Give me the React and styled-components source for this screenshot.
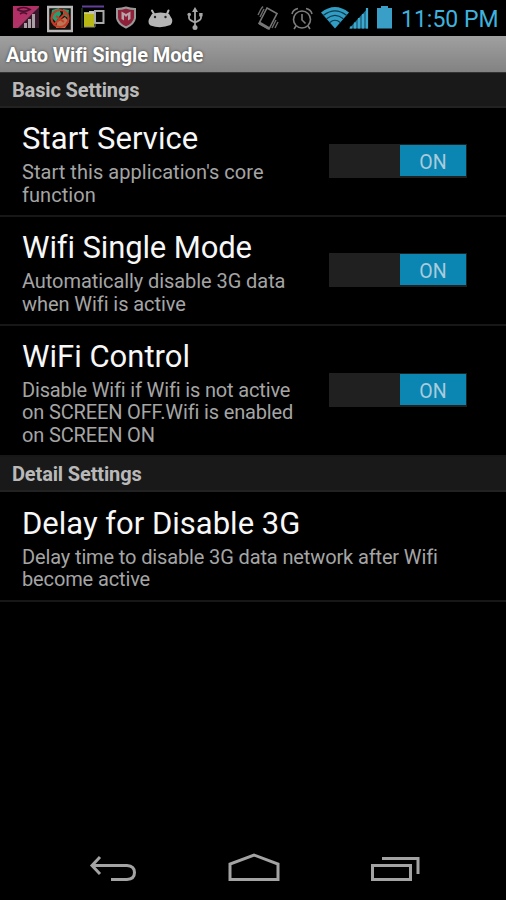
import React from "react";
import styled, { createGlobalStyle } from "styled-components";

const GlobalStyle = createGlobalStyle`
  * {
    box-sizing: border-box;
  }
  body {
    margin: 0;
    background: #000000;
    font-family: Roboto, sans-serif;
  }
`;

const Screen = styled.div`
  display: flex;
  flex-direction: column;
  width: 506px;
  height: 900px;
  background: #000000;
  overflow: hidden;
`;
const StatusBar = styled.header`
  display: flex;
  flex: none;
  justify-content: space-between;
  height: 36px;
  padding: 0 7px 0 13px;
`;
const StatusGroup = styled.div`
  display: flex;
  align-items: flex-start;
`;
const StatusIcon = styled.svg`
  flex: none;
  width: ${props => props.$width}px;
  height: 36px;
  margin-right: ${props => props.$gap || 0}px;
`;
const Clock = styled.span`
  width: 98px;
  color: #3fb2dd;
  font-size: 23px;
  line-height: 39px;
  white-space: nowrap;
`;
const TitleBar = styled.h1`
  flex: none;
  height: 37px;
  margin: 0;
  padding-left: 6px;
  background: linear-gradient(#a0a0a0, #828282);
  border-bottom: 1px solid #333333;
  color: #ffffff;
  font-size: 20px;
  font-weight: 700;
  line-height: 38px;
  letter-spacing: -0.12px;
  text-shadow: 0 0 3px rgba(0, 0, 0, 0.6);
`;
const SectionTitle = styled.h2`
  flex: none;
  height: 35px;
  margin: 0;
  padding-left: 12px;
  background: #191919;
  border-bottom: 2px solid #222222;
  color: #b9b9b9;
  font-size: 20px;
  font-weight: 700;
  line-height: 34px;
  letter-spacing: -0.14px;
`;
const Row = styled.section`
  display: flex;
  flex: none;
  align-items: center;
  justify-content: space-between;
  height: ${props => props.$height}px;
  padding: 0 39px 2px 22px;
  border-bottom: 2px solid #171717;
`;
const RowText = styled.div`
  padding-top: 5px;
`;
const RowTitle = styled.h3`
  margin: 0;
  color: #f7f7f7;
  font-size: 31px;
  font-weight: 400;
  line-height: 38px;
  letter-spacing: ${props => props.$spacing || 0}px;
  white-space: nowrap;
`;
const Summary = styled.p`
  margin: 0;
  padding-top: 3px;
  color: #a5a5a5;
  font-size: 20px;
  line-height: 22.3px;
  letter-spacing: ${props => props.$spacing}px;
  white-space: pre;
`;
const Track = styled.div`
  display: flex;
  justify-content: flex-end;
  width: 138px;
  height: 34px;
  padding: 1px;
  background: #202020;
`;
const Thumb = styled.div`
  width: 66px;
  height: 31px;
  background: #0b86b2;
  color: #a9cbdc;
  font-size: 19.5px;
  line-height: 35px;
  text-align: center;
`;
const Spacer = styled.div`
  flex: 1;
`;
const NavBar = styled.nav`
  display: flex;
  flex: none;
  justify-content: space-between;
  height: 49px;
  padding: 0 86px 0 88px;
`;
const NavIcon = styled.svg`
  width: ${props => props.$width}px;
  height: 34px;
  fill: none;
  stroke: #a3a3a3;
  stroke-width: 3;
`;

const settings = [
  {
    title: "Start Service",
    summary: "Start this application's core\nfunction",
    height: 109,
    titleSpacing: 0.08,
    spacing: 0.05,
  },
  {
    title: "Wifi Single Mode",
    summary: "Automatically disable 3G data\nwhen Wifi is active",
    height: 109,
    titleSpacing: -0.12,
    spacing: -0.07,
  },
  {
    title: "WiFi Control",
    summary: "Disable Wifi if Wifi is not active\non SCREEN OFF.Wifi is enabled\non SCREEN ON",
    height: 131,
    spacing: -0.15,
  },
];

function Setting({ title, summary, height, titleSpacing, spacing, toggle }) {
  return (
    <Row $height={height}>
      <RowText>
        <RowTitle $spacing={titleSpacing}>{title}</RowTitle>
        <Summary $spacing={spacing}>{summary}</Summary>
      </RowText>
      {toggle && (
        <Track>
          <Thumb>ON</Thumb>
        </Track>
      )}
    </Row>
  );
}

function Notifications() {
  return (
    <StatusGroup>
      {/* wifi / mobile switch */}
      <StatusIcon $width={26} $gap={8} viewBox="0 0 26 36">
        <path d="M0 6H26V8L7 28H0Z" fill="#b52f67" />
        <path d="M26 7V28H5Z" fill="#35192a" />
        <path d="M4 9.500Q10.500 5.500 17 9.500Q10.500 13 4 9.500M7 14Q10.500 11.500 14 14" fill="none" stroke="#4a1230" strokeWidth="1.600" />
        <path d="M12.500 28V23M16.500 28V19M20.500 28V14" stroke="#a9a0a5" strokeWidth="3" />
        <path d="M1 27L25 7" stroke="#a43b68" strokeWidth="1.500" />
      </StatusIcon>
      {/* blocked app */}
      <StatusIcon $width={26} $gap={8} viewBox="0 0 26 36">
        <rect x="1" y="7" width="24" height="24" fill="#17110e" stroke="#b7b7b7" strokeWidth="2.500" />
        <path d="M5 10L12 8L14 14L9 22L4 17Z" fill="#22a071" />
        <path d="M16 9L22 10L21 18L16 15Z" fill="#25966a" />
        <path d="M10 22L18 17L22 22L18 28H9Z" fill="#ba7654" />
        <circle cx="13" cy="18.500" r="8.500" fill="none" stroke="#c63b27" strokeWidth="2.200" />
        <path d="M7 24.500L19 12.500M9 16L17 22" stroke="#c63b27" strokeWidth="2" />
      </StatusIcon>
      {/* file copy */}
      <StatusIcon $width={24} $gap={11} viewBox="0 0 24 36">
        <path d="M1 6.500H23" stroke="#60409b" strokeWidth="2" />
        <path d="M1 8V28" stroke="#213a1d" strokeWidth="1.500" />
        <rect x="14" y="11" width="8.500" height="12" fill="#050505" stroke="#aaaaaa" strokeWidth="2" />
        <path d="M3 12H13V27H3Z" fill="#b9b916" />
        <path d="M3 13H8V11H13V14H3Z" fill="#c3c3b8" />
        <path d="M3 27H14V23" fill="none" stroke="#8f8f77" />
      </StatusIcon>
      {/* shield */}
      <StatusIcon $width={20} $gap={12} viewBox="0 0 20 36">
        <path d="M1 9Q6 9 10 7.500Q14 9 19 9V18Q18 24 10 27.500Q2 24 1 18Z" fill="#8e2039" stroke="#989898" strokeWidth="2" />
        <path d="M5.500 11.500V19L8 20.500V15L10 17L12 15V20.500L14.500 19V11.500L10 14Z" fill="#b6a2a8" />
      </StatusIcon>
      {/* android head */}
      <StatusIcon $width={25} $gap={14} viewBox="0 0 25 36">
        <path d="M4 10.500L6 14M20.500 10.500L19 14" stroke="#b5b5b5" strokeWidth="2" strokeLinecap="round" />
        <path d="M4 14Q8 12.500 12.500 12.500Q17 12.500 21 14L24 19Q25 23 22.500 25Q12.500 29 2.500 25.500Q-0.500 24 1 19Z" fill="#b5b5b5" />
        <circle cx="7" cy="17" r="1.200" fill="#222222" />
        <circle cx="17.500" cy="17" r="1.200" fill="#222222" />
      </StatusIcon>
      {/* usb */}
      <StatusIcon $width={16} viewBox="0 0 16 36">
        <path d="M8 10V28M2 15V18Q2 20 8 22.500M14 15V18Q14 20 8 22.500" fill="none" stroke="#a5a5a5" strokeWidth="1.800" />
        <path d="M8 7L11 12H5Z" fill="#a5a5a5" />
        <circle cx="2.200" cy="14.500" r="1.800" fill="#a5a5a5" />
        <rect x="12.200" y="13" width="3.400" height="3.400" fill="#a5a5a5" />
        <circle cx="8" cy="27.500" r="2.500" fill="#a5a5a5" />
      </StatusIcon>
    </StatusGroup>
  );
}

function SystemStatus() {
  return (
    <StatusGroup>
      {/* vibrate */}
      <StatusIcon $width={22} $gap={12} viewBox="0 0 22 36">
        <path d="M10 8L20 13.500L12 29L2 23.500Z" fill="none" stroke="#777777" strokeWidth="1.600" />
        <path d="M2.500 23L12 28.500" stroke="#777777" strokeWidth="3" />
        <path d="M1 15L4 9M3 17L7 9M4 9L6 6.500M15 28L19 20M18 28L21 22" stroke="#6c6c6c" strokeWidth="1.400" />
      </StatusIcon>
      {/* alarm */}
      <StatusIcon $width={22} $gap={8} viewBox="0 0 22 36">
        <g fill="none" stroke="#7c7c7c" strokeWidth="1.600">
          <circle cx="11" cy="19.500" r="8.500" />
          <path d="M11 14V20L14.500 23.500M1 14Q2 9.500 7 8.500M21 14Q20 9.500 15 8.500M5 26L3 29M17 26L19 29" />
        </g>
      </StatusIcon>
      {/* wifi */}
      <StatusIcon $width={28} viewBox="0 0 28 36">
        <path d="M0 12.500Q14 1.500 28 12.500L14 28.500Z" fill="#329dc4" />
        <path d="M2.500 15.300Q14 6.500 25.500 15.300M5.600 18.800Q14 12 22.400 18.800M8.800 22.500Q14 18 19.200 22.500" fill="none" stroke="#0d394a" strokeWidth="1.200" />
      </StatusIcon>
      {/* signal */}
      <StatusIcon $width={20} $gap={8} viewBox="0 0 20 36">
        <path d="M0 28.500L19 8V28.500Z" fill="#23718f" />
        <path d="M2 28.500V26.500M6 28.500V22.500M10 28.500V18M14 28.500V14M18 28.500V8" stroke="#3ca8ce" strokeWidth="2.200" />
      </StatusIcon>
      {/* battery */}
      <StatusIcon $width={15} $gap={9} viewBox="0 0 15 36">
        <path d="M4 6H11V8H15V28.500H0V8H4Z" fill="#3a9fc6" />
      </StatusIcon>
      <Clock>11:50 PM</Clock>
    </StatusGroup>
  );
}

export default function App() {
  return (
    <Screen>
      <GlobalStyle />
      <StatusBar>
        <Notifications />
        <SystemStatus />
      </StatusBar>
      <TitleBar>Auto Wifi Single Mode</TitleBar>
      <SectionTitle>Basic Settings</SectionTitle>
      {settings.map(item => (
        <Setting key={item.title} {...item} toggle />
      ))}
      <SectionTitle>Detail Settings</SectionTitle>
      <Setting
        title="Delay for Disable 3G"
        summary={"Delay time to disable 3G data network after Wifi\nbecome active"}
        height={110}
        spacing={-0.13}
      />
      <Spacer />
      <NavBar>
        <NavIcon $width={49} viewBox="0 0 49 34">
          <path d="M12 6L4 14.500L12 23M4 14.500H39Q46.500 15 46.500 21.500Q46.500 28 39 28.500H23" />
        </NavIcon>
        <NavIcon $width={54} viewBox="0 0 54 34">
          <path d="M3 28.500V13L27 4L51 13V28.500Z" />
        </NavIcon>
        <NavIcon $width={50} viewBox="0 0 50 34">
          <path d="M2.500 14.500H40.500V28.500H2.500ZM12 7.500H48V23" />
        </NavIcon>
      </NavBar>
    </Screen>
  );
}
